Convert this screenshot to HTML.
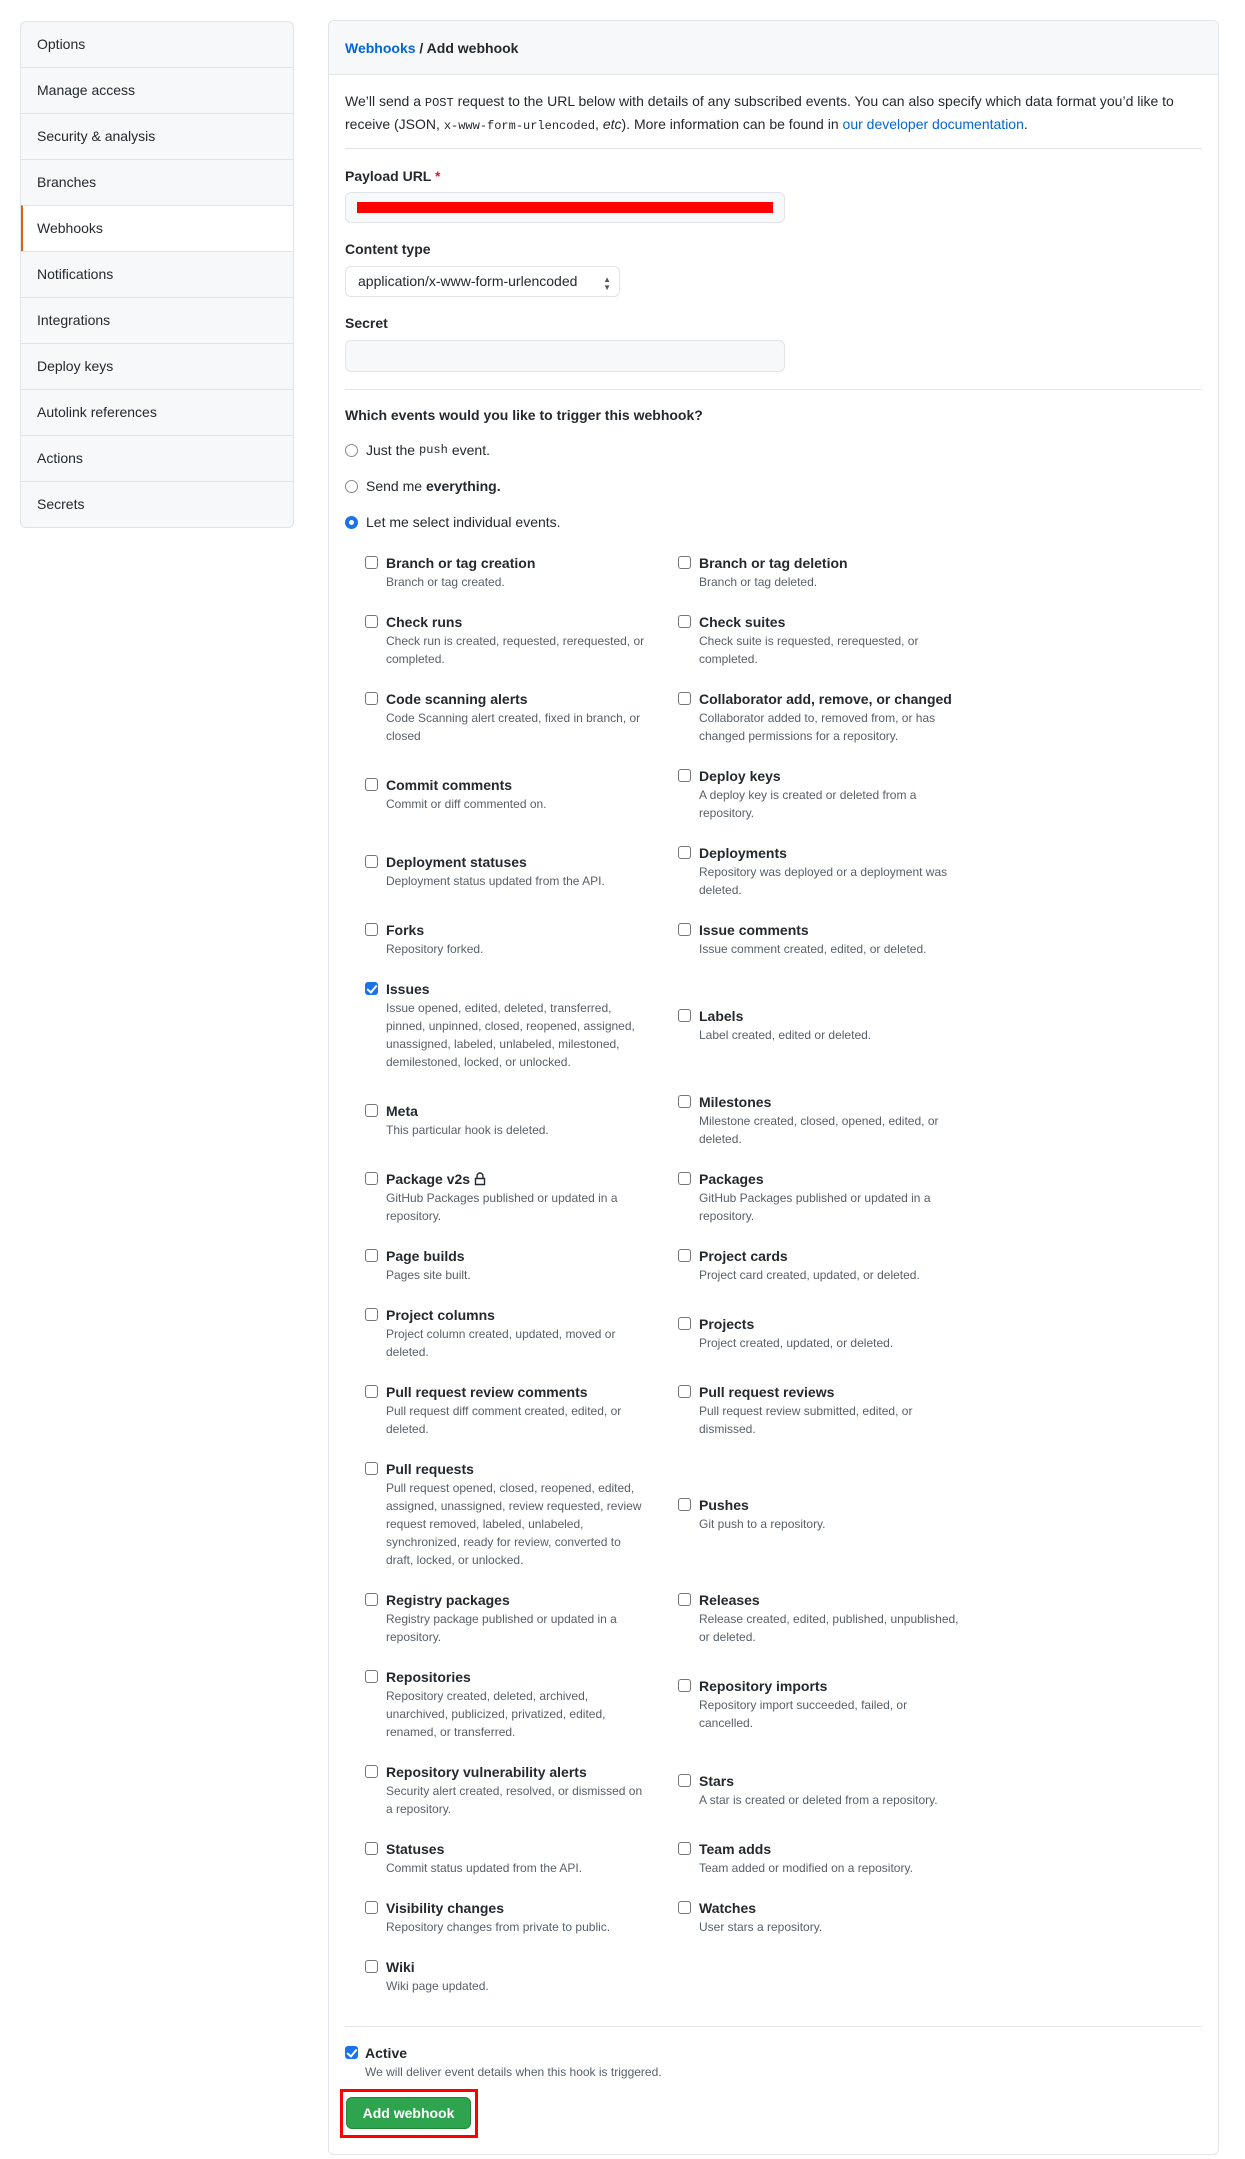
<!DOCTYPE html>
<html><head><meta charset="utf-8">
<style>
*{box-sizing:border-box;margin:0;padding:0}
body{width:1245px;height:2159px;background:#fff;font-family:"Liberation Sans",Arial,sans-serif;color:#24292e;font-size:14px;position:relative;overflow:hidden}
.side{position:absolute;left:20px;top:21px;width:274px;border:1px solid #e1e4e8;border-radius:6px;background:#f6f8fa;overflow:hidden}
.side div{height:46px;line-height:45px;padding-left:16px;border-top:1px solid #e1e4e8;font-size:14px}
.side div:first-child{border-top:0;height:45px}
.side div.sel{background:#fff;border-left:2px solid #e36209;padding-left:14px}
.main{position:absolute;left:328px;top:20px;width:891px;height:2135px;border:1px solid #e1e4e8;border-radius:6px}
.hd{height:54px;background:#f6f8fa;border-bottom:1px solid #e1e4e8;border-radius:6px 6px 0 0;padding-left:16px;line-height:54px;font-weight:bold;font-size:14px}
a{color:#0366d6;text-decoration:none}
.abs{position:absolute}
code{font-family:"Liberation Mono",monospace;font-size:12px}
.lbl{font-weight:bold;font-size:14px}
.inp{border:1px solid #e1e4e8;background:#f6f8fa;border-radius:6px}
.hr{position:absolute;left:16px;right:16px;height:1px;background:#e1e4e8}
.radio{position:absolute;left:16px;font-size:14px;display:flex;align-items:center}
.radio i{width:13px;height:13px;border:1px solid #8a8a8a;border-radius:50%;margin-right:8px;display:inline-block;background:#fff}
.radio i.on{border:4px solid #1a73e8}
.ev{position:absolute;left:36px;top:532px;width:700px}
.row{display:flex;align-items:center;margin-bottom:21px}
.cell{width:313px;position:relative;padding-left:21px}
.cb{position:absolute;left:0;top:3px;width:13px;height:13px;border:1px solid #767676;border-radius:3px;background:#fff}
.cb.on{background:#1a73e8;border-color:#1a73e8}
.cb.on:after{content:"";position:absolute;left:3px;top:0px;width:4px;height:8px;border:solid #fff;border-width:0 2px 2px 0;transform:rotate(40deg)}
.t{font-weight:bold;font-size:14px;line-height:20px}
.d{font-size:12px;line-height:18px;color:#586069;width:265px}
.btn{position:absolute;left:17px;top:2076px;width:125px;height:32px;background:#2ea44f;border:1px solid #22863a;border-radius:6px;color:#fff;font-weight:bold;font-size:14px;text-align:center;line-height:30px}
</style></head><body>
<div class="side">
<div>Options</div><div>Manage access</div><div>Security &amp; analysis</div><div>Branches</div><div class="sel">Webhooks</div><div>Notifications</div><div>Integrations</div><div>Deploy keys</div><div>Autolink references</div><div>Actions</div><div>Secrets</div>
</div>
<div class="main">
<div class="hd"><a href="#">Webhooks</a> / Add webhook</div>
<div class="abs" style="left:16px;top:70px;width:860px;line-height:21px;font-size:14px">We’ll send a <code>POST</code> request to the URL below with details of any subscribed events. You can also specify which data format you’d like to receive (JSON, <code>x-www-form-urlencoded</code>, <i>etc</i>). More information can be found in <a href="#">our developer documentation</a>.</div>
<div class="hr" style="top:127px"></div>
<div class="abs lbl" style="left:16px;top:147px">Payload URL <span style="color:#cb2431">*</span></div>
<div class="abs inp" style="left:16px;top:171px;width:440px;height:31px"></div>
<div class="abs" style="left:28px;top:181px;width:416px;height:11px;background:#ff0000"></div>
<div class="abs lbl" style="left:16px;top:220px">Content type</div>
<div class="abs" style="left:16px;top:245px;width:275px;height:31px;border:1px solid #e1e4e8;border-radius:6px;line-height:29px;padding-left:12px;font-size:14px">application/x-www-form-urlencoded<span style="position:absolute;right:8px;font-size:8px;line-height:8px;top:9px;color:#555">▲<br>▼</span></div>
<div class="abs lbl" style="left:16px;top:294px">Secret</div>
<div class="abs inp" style="left:16px;top:319px;width:440px;height:32px"></div>
<div class="hr" style="top:368px"></div>
<div class="abs lbl" style="left:16px;top:386px">Which events would you like to trigger this webhook?</div>
<div class="radio" style="top:421px"><i></i>Just the <code style="margin:0 4px">push</code> event.</div>
<div class="radio" style="top:457px"><i></i>Send me&nbsp;<b>everything.</b></div>
<div class="radio" style="top:493px"><i class="on"></i>Let me select individual events.</div>

<div class="ev">
<div class="row"><div class="cell"><span class="cb"></span><div class="t">Branch or tag creation</div><div class="d">Branch or tag created.</div></div><div class="cell"><span class="cb"></span><div class="t">Branch or tag deletion</div><div class="d">Branch or tag deleted.</div></div></div>
<div class="row"><div class="cell"><span class="cb"></span><div class="t">Check runs</div><div class="d">Check run is created, requested, rerequested, or completed.</div></div><div class="cell"><span class="cb"></span><div class="t">Check suites</div><div class="d">Check suite is requested, rerequested, or completed.</div></div></div>
<div class="row"><div class="cell"><span class="cb"></span><div class="t">Code scanning alerts</div><div class="d">Code Scanning alert created, fixed in branch, or closed</div></div><div class="cell"><span class="cb"></span><div class="t">Collaborator add, remove, or changed</div><div class="d">Collaborator added to, removed from, or has changed permissions for a repository.</div></div></div>
<div class="row"><div class="cell"><span class="cb"></span><div class="t">Commit comments</div><div class="d">Commit or diff commented on.</div></div><div class="cell"><span class="cb"></span><div class="t">Deploy keys</div><div class="d">A deploy key is created or deleted from a repository.</div></div></div>
<div class="row"><div class="cell"><span class="cb"></span><div class="t">Deployment statuses</div><div class="d">Deployment status updated from the API.</div></div><div class="cell"><span class="cb"></span><div class="t">Deployments</div><div class="d">Repository was deployed or a deployment was deleted.</div></div></div>
<div class="row"><div class="cell"><span class="cb"></span><div class="t">Forks</div><div class="d">Repository forked.</div></div><div class="cell"><span class="cb"></span><div class="t">Issue comments</div><div class="d">Issue comment created, edited, or deleted.</div></div></div>
<div class="row"><div class="cell"><span class="cb on"></span><div class="t">Issues</div><div class="d">Issue opened, edited, deleted, transferred, pinned, unpinned, closed, reopened, assigned, unassigned, labeled, unlabeled, milestoned, demilestoned, locked, or unlocked.</div></div><div class="cell"><span class="cb"></span><div class="t">Labels</div><div class="d">Label created, edited or deleted.</div></div></div>
<div class="row"><div class="cell"><span class="cb"></span><div class="t">Meta</div><div class="d">This particular hook is deleted.</div></div><div class="cell"><span class="cb"></span><div class="t">Milestones</div><div class="d">Milestone created, closed, opened, edited, or deleted.</div></div></div>
<div class="row"><div class="cell"><span class="cb"></span><div class="t">Package v2s <svg width="12" height="14" viewBox="0 0 12 14" style="vertical-align:-2px"><path d="M3 6V4a3 3 0 0 1 6 0v2M1.5 6.5h9v6h-9z" fill="none" stroke="#24292e" stroke-width="1.4"/></svg></div><div class="d">GitHub Packages published or updated in a repository.</div></div><div class="cell"><span class="cb"></span><div class="t">Packages</div><div class="d">GitHub Packages published or updated in a repository.</div></div></div>
<div class="row"><div class="cell"><span class="cb"></span><div class="t">Page builds</div><div class="d">Pages site built.</div></div><div class="cell"><span class="cb"></span><div class="t">Project cards</div><div class="d">Project card created, updated, or deleted.</div></div></div>
<div class="row"><div class="cell"><span class="cb"></span><div class="t">Project columns</div><div class="d">Project column created, updated, moved or deleted.</div></div><div class="cell"><span class="cb"></span><div class="t">Projects</div><div class="d">Project created, updated, or deleted.</div></div></div>
<div class="row"><div class="cell"><span class="cb"></span><div class="t">Pull request review comments</div><div class="d">Pull request diff comment created, edited, or deleted.</div></div><div class="cell"><span class="cb"></span><div class="t">Pull request reviews</div><div class="d">Pull request review submitted, edited, or dismissed.</div></div></div>
<div class="row"><div class="cell"><span class="cb"></span><div class="t">Pull requests</div><div class="d">Pull request opened, closed, reopened, edited, assigned, unassigned, review requested, review request removed, labeled, unlabeled, synchronized, ready for review, converted to draft, locked, or unlocked.</div></div><div class="cell"><span class="cb"></span><div class="t">Pushes</div><div class="d">Git push to a repository.</div></div></div>
<div class="row"><div class="cell"><span class="cb"></span><div class="t">Registry packages</div><div class="d">Registry package published or updated in a repository.</div></div><div class="cell"><span class="cb"></span><div class="t">Releases</div><div class="d">Release created, edited, published, unpublished, or deleted.</div></div></div>
<div class="row"><div class="cell"><span class="cb"></span><div class="t">Repositories</div><div class="d">Repository created, deleted, archived, unarchived, publicized, privatized, edited, renamed, or transferred.</div></div><div class="cell"><span class="cb"></span><div class="t">Repository imports</div><div class="d">Repository import succeeded, failed, or cancelled.</div></div></div>
<div class="row"><div class="cell"><span class="cb"></span><div class="t">Repository vulnerability alerts</div><div class="d">Security alert created, resolved, or dismissed on a repository.</div></div><div class="cell"><span class="cb"></span><div class="t">Stars</div><div class="d">A star is created or deleted from a repository.</div></div></div>
<div class="row"><div class="cell"><span class="cb"></span><div class="t">Statuses</div><div class="d">Commit status updated from the API.</div></div><div class="cell"><span class="cb"></span><div class="t">Team adds</div><div class="d">Team added or modified on a repository.</div></div></div>
<div class="row"><div class="cell"><span class="cb"></span><div class="t">Visibility changes</div><div class="d">Repository changes from private to public.</div></div><div class="cell"><span class="cb"></span><div class="t">Watches</div><div class="d">User stars a repository.</div></div></div>
<div class="row"><div class="cell"><span class="cb"></span><div class="t">Wiki</div><div class="d">Wiki page updated.</div></div></div>
</div>

<div class="hr" style="top:2005px"></div>
<div class="abs" style="left:16px;top:2022px;width:600px"><div style="position:relative;padding-left:20px"><span class="cb on" style="top:3px"></span><div class="t">Active</div><div class="d" style="width:500px">We will deliver event details when this hook is triggered.</div></div></div>
<div class="abs" style="left:11px;top:2068px;width:138px;height:49px;border:3px solid #ff0000"></div>
<div class="btn">Add webhook</div>
</div>
</body></html>
